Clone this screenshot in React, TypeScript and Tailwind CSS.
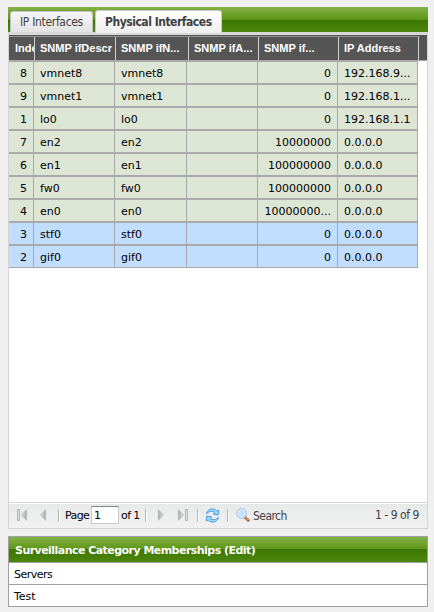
import type { ReactNode } from 'react';

const headers = ['Inde', 'SNMP ifDescr', 'SNMP ifN...', 'SNMP ifA...', 'SNMP if...', 'IP Address'];

const rows = [
  ['8', 'vmnet8', '0', '192.168.9...'],
  ['9', 'vmnet1', '0', '192.168.1...'],
  ['1', 'lo0', '0', '192.168.1.1'],
  ['7', 'en2', '10000000', '0.0.0.0'],
  ['6', 'en1', '100000000', '0.0.0.0'],
  ['5', 'fw0', '100000000', '0.0.0.0'],
  ['4', 'en0', '10000000...', '0.0.0.0'],
  ['3', 'stf0', '0', '0.0.0.0'],
  ['2', 'gif0', '0', '0.0.0.0'],
];

const green = 'bg-[linear-gradient(to_bottom,#83b147_0%,#5c9514_50%,#3d7700_50%,#4d860c_100%)]';
const tahoma = "font-['DejaVu_Sans_Condensed','DejaVu_Sans',sans-serif] [font-stretch:condensed]";

function Cell({ children, className = '' }: { children?: ReactNode; className?: string }) {
  return (
    <div className={`h-[21px] overflow-hidden whitespace-nowrap border-r border-[#a9a9a9] leading-[23px] ${className}`}>
      {children}
    </div>
  );
}

function Separator({ className = '' }: { className?: string }) {
  return <div className={`h-[13px] w-px shrink-0 bg-[#b9b7aa] shadow-[1px_0_0_#fff] ${className}`} />;
}

function Arrow({ flip = false, bar = false, className = '' }: { flip?: boolean; bar?: boolean; className?: string }) {
  return (
    <svg viewBox="0 0 11 12" className={`h-3 w-[11px] shrink-0 ${flip ? '-scale-x-100' : ''} ${className}`}>
      <defs>
        <linearGradient id="arrowFill" x1="0" x2="1">
          <stop offset="0" stopColor="#e4e4e4" />
          <stop offset="1" stopColor="#a8a8a8" />
        </linearGradient>
      </defs>
      {bar && <rect x="0.5" y="0.5" width="2" height="11" fill="#dedede" stroke="#b2b2b2" strokeWidth="0.9" />}
      <path d="M9.6 0.8V11.2L4.4 6Z" fill="url(#arrowFill)" stroke="#b5b5b5" strokeWidth="0.8" />
    </svg>
  );
}

function RefreshIcon() {
  return (
    <svg viewBox="0 0 15 15" className="ml-[7px] size-[15px] shrink-0">
      <g fill="#a9dcff" stroke="#2a8be0" strokeWidth="0.85" strokeLinejoin="round">
        <path d="M1.6 5.6C2.2 2.2 5.4.4 8.8 1.1 10 1.4 11 2.1 11.7 3L13.6 2.2 13.2 6.9 8.4 6.1 9.9 4.4C7.4 2.6 4.2 3 1.6 5.6Z" />
        <path d="M13.4 9.4C12.8 12.8 9.6 14.6 6.2 13.9 5 13.6 4 12.9 3.3 12L1.4 12.8 1.8 8.1 6.6 8.9 5.1 10.6C7.6 12.4 10.8 12 13.4 9.4Z" />
      </g>
    </svg>
  );
}

function SearchIcon() {
  return (
    <svg viewBox="0 0 14 14" className="ml-2 size-[14px] shrink-0">
      <path d="M8.9 9 12.2 12.2" stroke="#8b5a2b" strokeWidth="2.8" strokeLinecap="round" />
      <path d="M9.6 9.3 12 11.7" stroke="#e5a560" strokeWidth="1.5" strokeLinecap="round" />
      <circle cx="5.5" cy="5.5" r="4.8" fill="#b9dcf8" stroke="#9abce0" />
      <circle cx="5.5" cy="5.5" r="3.8" fill="#c5e3fb" stroke="#e9f5ff" strokeWidth="0.7" />
    </svg>
  );
}

export default function App() {
  return (
    <div className="h-[612px] w-[434px] overflow-hidden bg-[#f0f0f0] pl-2 pt-[7px] font-['DejaVu_Sans',sans-serif] text-[11px] text-black">
      <section className="flex h-[522px] w-[420px] flex-col border-x border-b border-[#d4d4d4] bg-white">
        <div className={`-mx-px flex h-[25px] shrink-0 items-end pl-[2px] text-[12px] text-[#404040] ${green} ${tahoma}`}>
          <div className="h-[21px] w-[83px] rounded-t-[3px] border-x border-t border-[#c2c2c2] bg-linear-to-b from-[#f7f7f7] to-[#e2e2e2] pl-[9px] leading-[21px] whitespace-nowrap tracking-[-0.32px]">
            IP Interfaces
          </div>
          <div className="relative top-px ml-[2px] h-[23px] w-[127px] rounded-t-[3px] border-x border-t border-[#c8c8c8] bg-linear-to-b from-white to-[#eeeeee] pl-[9px] font-bold leading-[22px] whitespace-nowrap tracking-[-0.47px]">
            Physical Interfaces
          </div>
        </div>
        <div className="h-[3px] shrink-0 bg-[#d9d9d9]" />
        <div className="h-[26px] shrink-0 border-b border-[#a9a9a9] bg-[#555555] pt-px">
          <div className="grid h-6 w-[410px] grid-cols-[26px_81px_73px_70px_80px_80px] border-t border-[#929292] font-['Liberation_Sans',Arial,sans-serif] text-[11px] font-bold leading-[23px] text-white">
            {headers.map((header) => (
              <div key={header} className="overflow-hidden whitespace-nowrap border-r border-[#d0d0d0] pl-[5px] first:pl-[6px]">
                {header}
              </div>
            ))}
          </div>
        </div>
        <div className="w-[409px]">
          {rows.map(([index, name, speed, address], i) => (
            <div
              key={index}
              className={`grid h-[23px] grid-cols-[25px_81px_72px_71px_80px_80px] border-y border-[#a9a9a9] ${i > 6 ? 'bg-[#c1ddff]' : 'bg-[#dde6d5]'}`}
            >
              <Cell className="pr-[6px] text-right">{index}</Cell>
              <Cell className="pl-[6px]">{name}</Cell>
              <Cell className="pl-[6px]">{name}</Cell>
              <Cell />
              <Cell className="pr-[6px] text-right">{speed}</Cell>
              <Cell className="pl-[6px]">{address}</Cell>
            </div>
          ))}
        </div>
        <div className="mt-auto flex h-[26px] shrink-0 items-center border-t border-[#d4d4d4] bg-linear-to-b from-[#e7e9e9] to-[#f1f1f1] pb-px shadow-[inset_0_1px_0_#fff]">
          <Arrow bar className="ml-[8px]" />
          <Arrow className="ml-[8px]" />
          <Separator className="ml-[11px]" />
          <span className="ml-[6px] w-[26px] pt-[3px] whitespace-nowrap tracking-[-0.6px]">Page</span>
          <div className="h-[18px] w-7 border border-[#c8c8c8] border-t-[#858585] bg-white pl-[2px] leading-[17px]">1</div>
          <span className="ml-[2px] w-[24px] pt-[3px] whitespace-nowrap tracking-[-0.6px]">of 1</span>
          <Separator />
          <Arrow flip className="ml-[11px]" />
          <Arrow bar flip className="ml-[9px]" />
          <Separator className="ml-[9px]" />
          <RefreshIcon />
          <Separator className="ml-[7px]" />
          <SearchIcon />
          <span className={`ml-[3px] pt-[2px] text-[12px] tracking-[-0.55px] text-[#444] ${tahoma}`}>Search</span>
          <span className={`ml-auto mr-[8px] text-[12px] tracking-[-0.45px] text-[#444] ${tahoma}`}>1 - 9 of 9</span>
        </div>
      </section>
      <section className="mt-[7px] w-[420px] border border-[#a0a0a0] bg-white">
        <div className={`h-[26px] border-b border-[#a0a0a0] pl-[6px] font-bold leading-[27px] text-white ${green}`}>
          <span className="tracking-[-0.54px]">Surveillance Category Memberships (Edit)</span>
        </div>
        <div className="h-[22px] border-b border-[#a0a0a0] pl-[5px] leading-[23px] tracking-[-0.5px]">Servers</div>
        <div className="h-[21px] pl-[5px] leading-[23px]">Test</div>
      </section>
    </div>
  );
}
